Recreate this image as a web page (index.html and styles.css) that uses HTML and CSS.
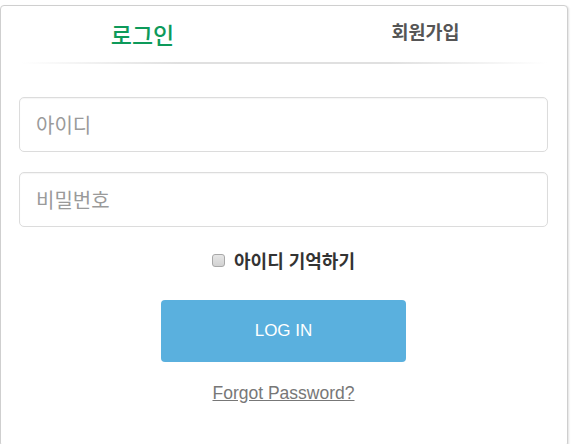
FILE: index.html
```html
<!DOCTYPE html>
<html lang="ko">
<head>
<meta charset="utf-8">
<link rel="stylesheet" href="styles.css">
</head>
<body>
<div class="card">
  <div class="tabs">
    <div class="tab tab-active">로그인</div>
    <div class="tab tab-other">회원가입</div>
  </div>
  <div class="divider"></div>
  <form class="form">
    <input class="field" type="text" placeholder="아이디">
    <input class="field" type="password" placeholder="비밀번호">
    <label class="remember"><input class="check" type="checkbox"><span>아이디 기억하기</span></label>
    <button class="btn" type="button">LOG IN</button>
    <a class="forgot" href="#">Forgot Password?</a>
  </form>
</div>
</body>
</html>
```
FILE: styles.css
```css
html, body {
  margin: 0;
  padding: 0;
  background: #fff;
}
body {
  font-family: "Noto Sans CJK KR", "Liberation Sans", sans-serif;
}
.card {
  margin-top: 5px;
  width: 568px;
  height: 442px;
  box-sizing: border-box;
  border: 1px solid #cfcfcf;
  border-radius: 4px;
  box-shadow: 1px 1px 2px rgba(0, 0, 0, 0.12);
  background: #fff;
}
.tabs {
  display: flex;
  height: 56px;
  align-items: center;
}
.tab {
  flex: 1;
  text-align: center;
  line-height: 30px;
}
.tab-active {
  color: #0d9a5a;
  font-size: 23px;
  font-weight: 500;
}
.tab-other {
  color: #555;
  font-size: 18.5px;
  font-weight: 700;
  margin-bottom: 6px;
}
.divider {
  height: 2px;
  margin: 0 20px;
  background: linear-gradient(to right, rgba(221,221,221,0), #e0e0e0 30%, #e0e0e0 70%, rgba(221,221,221,0));
}
.form {
  display: flex;
  flex-direction: column;
  padding: 33px 19px 0 18px;
}
.field {
  display: block;
  height: 55px;
  box-sizing: border-box;
  border: 1px solid #dcdcdc;
  border-radius: 5px;
  padding: 0 16px;
  margin: 0 0 20px 0;
  font-family: "Noto Sans CJK KR", sans-serif;
  font-size: 20px;
  color: #333;
  outline: none;
  box-shadow: inset 0 1px 1px rgba(0,0,0,0.04);
}
.field::placeholder {
  color: #9a9a9a;
}
.remember {
  display: flex;
  align-items: center;
  justify-content: center;
  gap: 9px;
  height: 24px;
  margin-top: 1px;
  font-size: 18px;
  font-weight: 700;
  color: #333;
}
.check {
  appearance: none;
  -webkit-appearance: none;
  width: 13px;
  height: 13px;
  margin: 0;
  box-sizing: border-box;
  border: 1px solid #a8a8a8;
  border-radius: 3px;
  background: linear-gradient(#e6e6e6, #d2d2d2);
}
.btn {
  align-self: center;
  width: 245px;
  height: 62px;
  margin-top: 28px;
  border: none;
  border-radius: 4px;
  background: #5ab0de;
  color: #fff;
  font-family: "Liberation Sans", Arial, sans-serif;
  font-size: 17px;
}
.forgot {
  align-self: center;
  margin-top: 19px;
  line-height: 24px;
  font-family: "Liberation Sans", Arial, sans-serif;
  font-size: 17.5px;
  color: #777;
  text-decoration: underline;
}
```
